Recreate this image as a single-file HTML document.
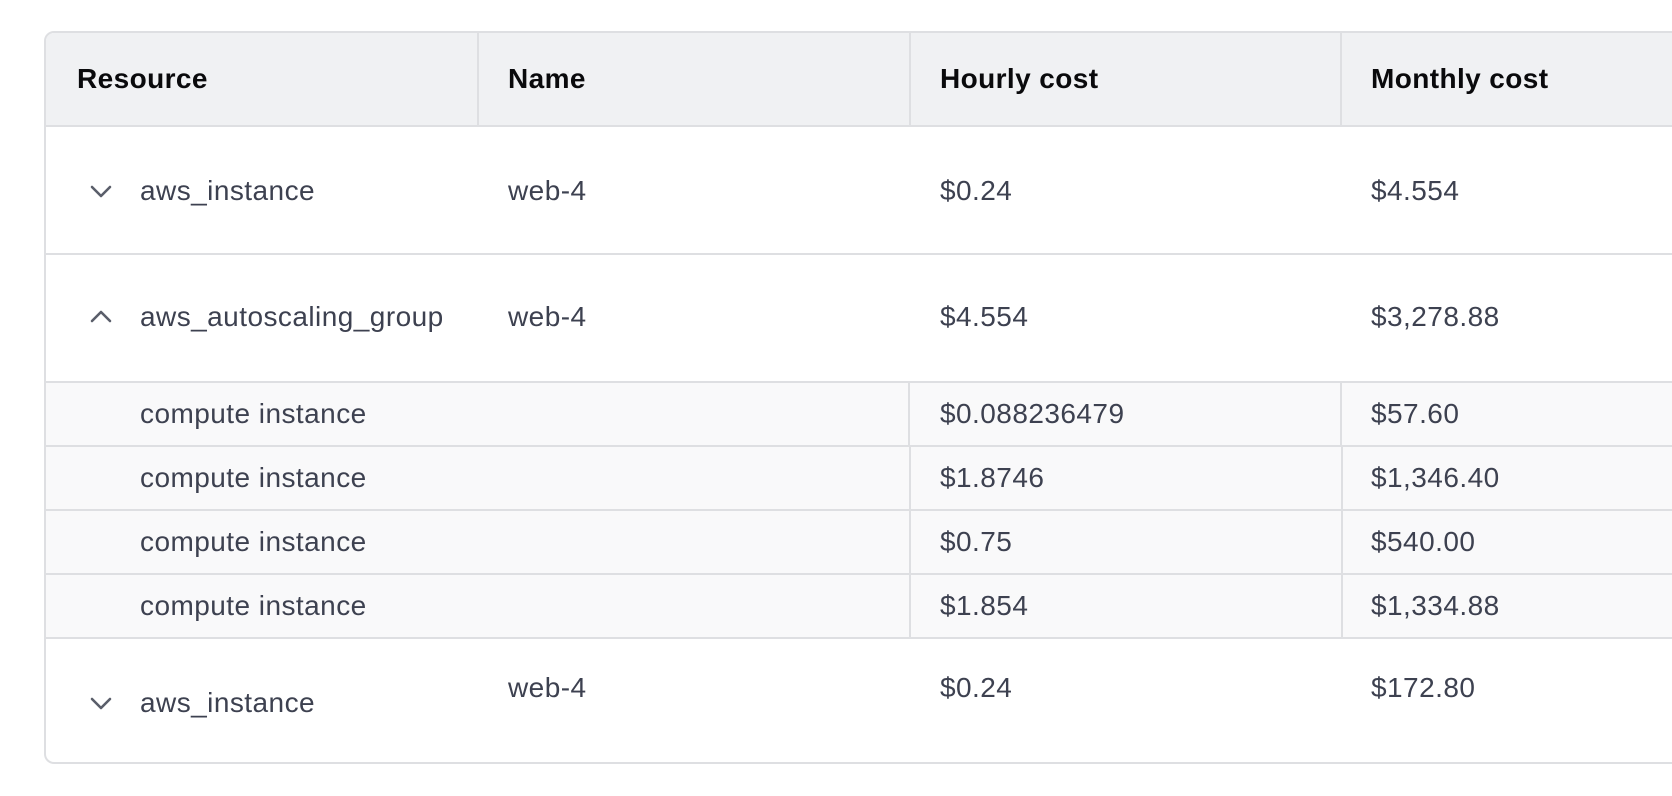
<!DOCTYPE html>
<html><head><meta charset="utf-8"><style>
html,body{margin:0;padding:0;background:#fff;width:1672px;height:796px;overflow:hidden;font-family:"Liberation Sans",Arial,sans-serif;}
.t{position:absolute;left:44px;top:31px;width:1700px;height:733px;border:2px solid #dedfe2;border-radius:10px;overflow:hidden;background:#fff;box-sizing:border-box;}
.r{position:absolute;left:0;width:100%;box-sizing:border-box;border-bottom:2px solid #dedfe2;}
.h{top:0;height:94px;background:#f0f1f3;}
.s{background:#f9f9fa;height:64px;}
.c{position:absolute;font-size:28px;color:#3d4150;white-space:nowrap;line-height:32px;letter-spacing:0.45px;}
.h .c{color:#0a0a0c;font-weight:bold;letter-spacing:0.4px;}
.v{position:absolute;top:0;bottom:0;width:2px;background:#dedfe2;}
svg{position:absolute;}
</style></head><body>
<div class="t">
 <div class="r h">
  <div class="c" style="left:31px;top:30px">Resource</div>
  <div class="v" style="left:431px"></div>
  <div class="c" style="left:462px;top:30px">Name</div>
  <div class="v" style="left:863px"></div>
  <div class="c" style="left:894px;top:30px">Hourly cost</div>
  <div class="v" style="left:1294px"></div>
  <div class="c" style="left:1325px;top:30px">Monthly cost</div>
 </div>
 <div class="r" style="top:94px;height:128px">
  <svg style="left:43px;top:52px" width="24" height="24" viewBox="0 0 24 24"><path d="M3 8l9 9 9-9" fill="none" stroke="#5a5e6a" stroke-width="2.6" stroke-linecap="round" stroke-linejoin="round"/></svg>
  <div class="c" style="left:94px;top:48px">aws_instance</div>
  <div class="c" style="left:462px;top:48px">web-4</div>
  <div class="c" style="left:894px;top:48px">$0.24</div>
  <div class="c" style="left:1325px;top:48px">$4.554</div>
 </div>
 <div class="r" style="top:222px;height:128px">
  <svg style="left:43px;top:50px" width="24" height="24" viewBox="0 0 24 24"><path d="M3 16l9-9 9 9" fill="none" stroke="#5a5e6a" stroke-width="2.6" stroke-linecap="round" stroke-linejoin="round"/></svg>
  <div class="c" style="left:94px;top:46px">aws_autoscaling_group</div>
  <div class="c" style="left:462px;top:46px">web-4</div>
  <div class="c" style="left:894px;top:46px">$4.554</div>
  <div class="c" style="left:1325px;top:46px">$3,278.88</div>
 </div>
 <div class="r s" style="top:350px">
  <div class="c" style="left:94px;top:15px">compute instance</div>
  <div class="v" style="left:862px"></div>
  <div class="c" style="left:894px;top:15px">$0.088236479</div>
  <div class="v" style="left:1294px"></div>
  <div class="c" style="left:1325px;top:15px">$57.60</div>
 </div>
 <div class="r s" style="top:414px">
  <div class="c" style="left:94px;top:15px">compute instance</div>
  <div class="v" style="left:863px"></div>
  <div class="c" style="left:894px;top:15px">$1.8746</div>
  <div class="v" style="left:1295px"></div>
  <div class="c" style="left:1325px;top:15px">$1,346.40</div>
 </div>
 <div class="r s" style="top:478px">
  <div class="c" style="left:94px;top:15px">compute instance</div>
  <div class="v" style="left:863px"></div>
  <div class="c" style="left:894px;top:15px">$0.75</div>
  <div class="v" style="left:1295px"></div>
  <div class="c" style="left:1325px;top:15px">$540.00</div>
 </div>
 <div class="r s" style="top:542px">
  <div class="c" style="left:94px;top:15px">compute instance</div>
  <div class="v" style="left:863px"></div>
  <div class="c" style="left:894px;top:15px">$1.854</div>
  <div class="v" style="left:1295px"></div>
  <div class="c" style="left:1325px;top:15px">$1,334.88</div>
 </div>
 <div class="r" style="top:606px;height:128px;border-bottom:none">
  <svg style="left:43px;top:52px" width="24" height="24" viewBox="0 0 24 24"><path d="M3 8l9 9 9-9" fill="none" stroke="#5a5e6a" stroke-width="2.6" stroke-linecap="round" stroke-linejoin="round"/></svg>
  <div class="c" style="left:94px;top:48px">aws_instance</div>
  <div class="c" style="left:462px;top:33px">web-4</div>
  <div class="c" style="left:894px;top:33px">$0.24</div>
  <div class="c" style="left:1325px;top:33px">$172.80</div>
 </div>
</div>
</body></html>
